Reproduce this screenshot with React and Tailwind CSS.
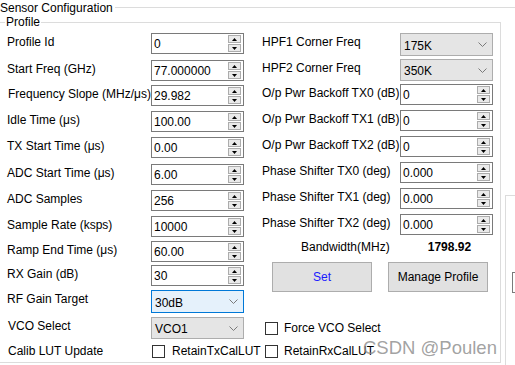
import React from 'react';

const SpinButton = ({ up }) => (
    <div className="flex h-[8px] w-[13px] items-center justify-center border border-[#acacac] bg-[#eaeaea]">
        <svg width="5" height="3" viewBox="0 0 5 3">
            {up ? <path d="M2.5 0 L5 3 L0 3 Z" fill="#000" /> : <path d="M0 0 L5 0 L2.5 3 Z" fill="#000" />}
        </svg>
    </div>
);

const SpinBox = ({ value }) => (
    <div className="flex h-[21px] w-[93px] shrink-0 items-center border border-[#7a7a7a] bg-white">
        <span className="flex-1 pl-[2px]">{value}</span>
        <div className="mr-[2px] flex flex-col gap-px">
            <SpinButton up />
            <SpinButton />
        </div>
    </div>
);

const Chevron = () => (
    <svg width="9" height="5" viewBox="0 0 9 5" className="mr-[5px]">
        <polyline points="0.5,0.5 4.5,4.5 8.5,0.5" fill="none" stroke="#7a7a7a" strokeWidth="1" />
    </svg>
);

const Dropdown = ({ value, focused, tall }) => (
    <div
        className={`flex w-[93px] shrink-0 items-center justify-between border ${tall ? 'h-[23px]' : 'h-[22px]'} ${
            focused ? 'border-[#0078d7] bg-[#e5f1fb]' : 'border-[#adadad] bg-[#e5e5e5]'
        }`}
    >
        <span className="pl-[3px] pt-[2px]">{value}</span>
        <Chevron />
    </div>
);

const CheckBox = () => <div className="h-[13px] w-[13px] shrink-0 border border-[#333333] bg-white" />;

const Row = ({ label, children, labelWidth, className = '' }) => (
    <div className={`flex items-start ${className}`}>
        <span className={`mt-[2px] shrink-0 whitespace-nowrap ${labelWidth}`}>{label}</span>
        {children}
    </div>
);

const App = () => {
    return (
        <div className="relative h-[365px] w-[515px] overflow-hidden bg-white font-['Liberation_Sans',Arial,sans-serif] text-[12px] leading-[14px] text-black">
            {/* Sensor Configuration group title */}
            <div className="flex h-[15px] items-center">
                <span className="whitespace-nowrap">Sensor Configuration</span>
                <div className="ml-[2px] h-px flex-1 bg-[#dcdcdc]" />
            </div>

            <div className="flex items-start">
                {/* Profile group */}
                <div className="mt-[7px] h-[341px] w-[501px] shrink-0 border-b border-r border-t border-[#dcdcdc]">
                    <div className="-mt-[8px] flex h-[14px]">
                        <span className="ml-[5px] bg-white px-[1px]">Profile</span>
                    </div>

                    <div className="mt-[4px] flex pl-[7px]">
                        {/* left column */}
                        <div className="flex w-[237px] flex-col">
                            <Row label="Profile Id" labelWidth="w-[144px]">
                                <SpinBox value="0" />
                            </Row>
                            <Row label="Start Freq (GHz)" labelWidth="w-[144px]" className="mt-[6px]">
                                <SpinBox value="77.000000" />
                            </Row>
                            <Row label="Frequency Slope (MHz/μs)" labelWidth="w-[144px] pl-[1px]" className="mt-[4px]">
                                <SpinBox value="29.982" />
                            </Row>
                            <Row label="Idle Time (μs)" labelWidth="w-[144px]" className="mt-[5px]">
                                <SpinBox value="100.00" />
                            </Row>
                            <Row label="TX Start Time (μs)" labelWidth="w-[144px]" className="mt-[5px]">
                                <SpinBox value="0.00" />
                            </Row>
                            <Row label="ADC Start Time (μs)" labelWidth="w-[144px]" className="mt-[6px]">
                                <SpinBox value="6.00" />
                            </Row>
                            <Row label="ADC Samples" labelWidth="w-[144px]" className="mt-[5px]">
                                <SpinBox value="256" />
                            </Row>
                            <Row label="Sample Rate (ksps)" labelWidth="w-[144px]" className="mt-[5px]">
                                <SpinBox value="10000" />
                            </Row>
                            <Row label="Ramp End Time (μs)" labelWidth="w-[144px]" className="mt-[4px]">
                                <SpinBox value="60.00" />
                            </Row>
                            <Row label="RX Gain (dB)" labelWidth="w-[144px]" className="mt-[3px]">
                                <SpinBox value="30" />
                            </Row>
                            <Row label="RF Gain Target" labelWidth="w-[144px]" className="mt-[4px]">
                                <Dropdown value="30dB" focused tall />
                            </Row>
                            <Row label="VCO Select" labelWidth="w-[144px] pl-[1px]" className="mt-[4px]">
                                <Dropdown value="VCO1" />
                            </Row>
                            <div className="mt-[5px] flex items-center">
                                <span className="w-[145px] shrink-0 whitespace-nowrap pl-[1px]">Calib LUT Update</span>
                                <CheckBox />
                                <span className="ml-[7px] whitespace-nowrap">RetainTxCalLUT</span>
                            </div>
                        </div>

                        {/* right column */}
                        <div className="ml-[18px] flex w-[232px] flex-col">
                            <Row label="HPF1 Corner Freq" labelWidth="w-[138px]">
                                <Dropdown value="175K" tall />
                            </Row>
                            <Row label="HPF2 Corner Freq" labelWidth="w-[138px]" className="mt-[3px]">
                                <Dropdown value="350K" />
                            </Row>
                            <Row label="O/p Pwr Backoff TX0 (dB)" labelWidth="w-[138px]" className="mt-[3px]">
                                <SpinBox value="0" />
                            </Row>
                            <Row label="O/p Pwr Backoff TX1 (dB)" labelWidth="w-[138px]" className="mt-[5px]">
                                <SpinBox value="0" />
                            </Row>
                            <Row label="O/p Pwr Backoff TX2 (dB)" labelWidth="w-[138px]" className="mt-[5px]">
                                <SpinBox value="0" />
                            </Row>
                            <Row label="Phase Shifter TX0 (deg)" labelWidth="w-[138px]" className="mt-[5px]">
                                <SpinBox value="0.000" />
                            </Row>
                            <Row label="Phase Shifter TX1 (deg)" labelWidth="w-[138px]" className="mt-[5px]">
                                <SpinBox value="0.000" />
                            </Row>
                            <Row label="Phase Shifter TX2 (deg)" labelWidth="w-[138px]" className="mt-[5px]">
                                <SpinBox value="0.000" />
                            </Row>

                            <div className="mt-[5px] flex h-[14px] items-center">
                                <span className="ml-[39px] whitespace-nowrap">Bandwidth(MHz)</span>
                                <span className="ml-[38px] font-bold">1798.92</span>
                            </div>

                            <div className="mt-[8px] flex">
                                <button className="ml-[10px] h-[30px] w-[100px] border border-[#adadad] bg-[#e1e1e1] text-[#1a1aff]">
                                    Set
                                </button>
                                <button className="ml-[16px] h-[30px] w-[100px] border border-[#adadad] bg-[#e1e1e1]">
                                    Manage Profile
                                </button>
                            </div>

                            <div className="mt-[29px] flex h-[14px] items-center">
                                <div className="ml-[3px]">
                                    <CheckBox />
                                </div>
                                <span className="ml-[6px] whitespace-nowrap">Force VCO Select</span>
                            </div>
                            <div className="mt-[9px] flex h-[14px] items-center">
                                <div className="ml-[3px]">
                                    <CheckBox />
                                </div>
                                <span className="ml-[6px] whitespace-nowrap">RetainRxCalLUT</span>
                            </div>
                        </div>
                    </div>
                </div>

                {/* next group, cut off at the right edge */}
                <div className="ml-[4px] mt-[180px] h-[170px] flex-1 border-l border-t border-[#dcdcdc]">
                    <div className="ml-[6px] mt-[76px] h-[21px] w-[20px] border border-[#7a7a7a]" />
                </div>
            </div>

            <span className="pointer-events-none absolute left-[363px] top-[337px] whitespace-nowrap text-[18.5px] leading-[22px] text-[#8a8a8a]/80">
                CSDN @Poulen
            </span>
        </div>
    );
};

export default App;
